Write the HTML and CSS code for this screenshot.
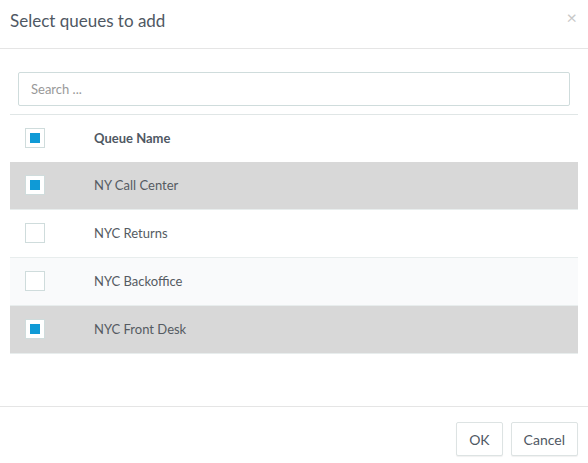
FILE: index.html
```html
<!DOCTYPE html>
<html lang="en">
<head>
	<meta charset="UTF-8">
	<title>Select queues</title>
	<link rel="stylesheet" href="styles.css">
</head>
<body>
	<div class="modal">
		<div class="modal-header">
			<h4 class="modal-title">Select queues to add</h4>
			<a href="javascript:;" class="close">&times;</a>
		</div>
		<div class="modal-body">
			<div class="search">
				<input type="text" placeholder="Search ...">
			</div>
			<table class="queues">
				<thead>
					<tr>
						<th class="col-check"><span class="check on"></span></th>
						<th>Queue Name</th>
					</tr>
				</thead>
				<tbody>
					<tr class="selected">
						<td class="col-check"><span class="check on"></span></td>
						<td>NY Call Center</td>
					</tr>
					<tr>
						<td class="col-check"><span class="check"></span></td>
						<td>NYC Returns</td>
					</tr>
					<tr class="odd">
						<td class="col-check"><span class="check"></span></td>
						<td>NYC Backoffice</td>
					</tr>
					<tr class="selected">
						<td class="col-check"><span class="check on"></span></td>
						<td>NYC Front Desk</td>
					</tr>
				</tbody>
			</table>
		</div>
		<div class="modal-footer">
			<button class="btn">OK</button>
			<button class="btn">Cancel</button>
		</div>
	</div>
</body>
</html>
```

FILE: styles.css
```css
*{
	margin:0;
	padding:0;
	box-sizing:border-box;
}
body{
	font-family:Lato,"Open Sans",sans-serif;
	color:#555;
	background:#fff;
}
.modal{
	width:588px;
	height:463px;
	display:flex;
	flex-direction:column;
}
.modal-header{
	height:49px;
	border-bottom:1px solid #e5e5e5;
	padding:0 10px;
	display:flex;
	align-items:center;
	justify-content:space-between;
}
.modal-title{
	font-size:17px;
	font-weight:normal;
	color:#4f5863;
	margin-top:-8px;
}
.close{
	color:#c8c8c8;
	font-size:18px;
	text-decoration:none;
	margin-top:-14px;
	margin-right:1px;
}
.modal-body{
	flex:1;
	padding:23px 10px 0;
}
.search{
	padding:0 8px 0 8px;
	margin-bottom:8px;
}
.search input{
	width:552px;
	height:34px;
	border:1px solid #cfdcdc;
	border-radius:2px;
	padding:0 12px;
	font-family:inherit;
	font-size:13px;
	color:#555;
	outline:none;
}
.search input::placeholder{
	color:#999;
}
.queues{
	width:568px;
	border-collapse:collapse;
	border-top:1px solid #e0e6e6;
}
.queues th,.queues td{
	text-align:left;
	font-size:13px;
	vertical-align:middle;
	border-bottom:1px solid #e8eded;
}
.queues th{
	height:47px;
	font-weight:bold;
	color:#4f5863;
	border-bottom:none;
}
.queues td{
	height:48px;
	color:#555b62;
	padding-bottom:1px;
}
.queues .col-check{
	width:84px;
	padding-left:15px;
}
.queues tr.selected td{
	background:#d8d8d8;
}
.queues tr.odd td{
	background:#f9fafb;
}
.check{
	display:block;
	width:20px;
	height:20px;
	border:1px solid #cfdcdc;
	background:#fff;
	position:relative;
}
.check.on:after{
	content:"";
	position:absolute;
	left:4px;
	top:4px;
	width:10px;
	height:10px;
	background:#0f9ad6;
}
.modal-footer{
	height:57px;
	border-top:1px solid #e5e5e5;
	padding:15px 10px 0;
	display:flex;
	justify-content:flex-end;
	align-items:flex-start;
	gap:8px;
}
.btn{
	height:34px;
	padding:0 12px;
	background:#fff;
	border:1px solid #dde3e3;
	border-radius:2px;
	box-shadow:0 1px 1px rgba(0,0,0,.06);
	font-family:inherit;
	font-size:14px;
	color:#4f5863;
}
```
